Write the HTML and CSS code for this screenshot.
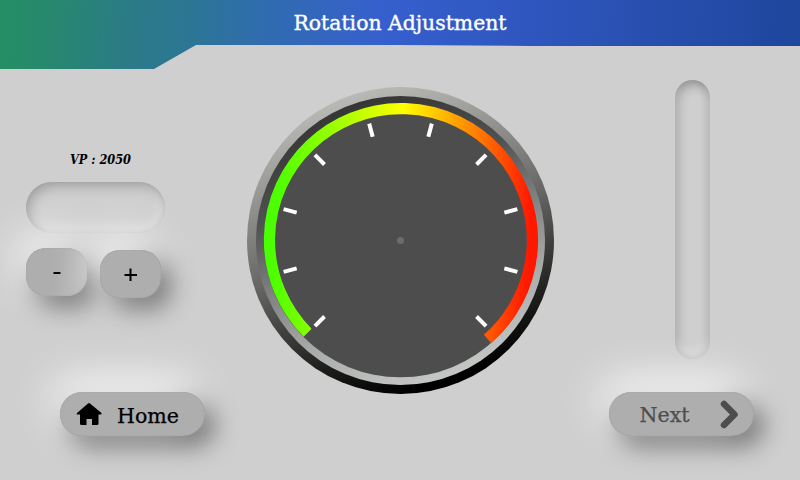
FILE: index.html
```html
<!DOCTYPE html>
<html lang="en">
<head>
<meta charset="utf-8">
<title>Rotation Adjustment</title>
<link rel="stylesheet" href="styles.css">
</head>
<body>
<header class="header">
  <svg class="label" width="220" height="34"><text class="title" x="3.5" y="22" textLength="213" lengthAdjust="spacingAndGlyphs">Rotation Adjustment</text></svg>
</header>
<main class="main">
  <section class="left">
    <svg class="vp" width="70" height="20"><text class="vp-text" x="4" y="15" textLength="61" lengthAdjust="spacingAndGlyphs">VP : 2050</text></svg>
    <div class="field"></div>
    <div class="steps">
      <button class="button step minus"><svg width="61" height="48"><path d="M27.5 25H34.5" stroke="#000" stroke-width="2"/></svg></button>
      <button class="button step plus"><svg width="61" height="48"><path d="M24.5 25H37M30.5 18.5V31" stroke="#000" stroke-width="2"/></svg></button>
    </div>
    <button class="button nav home">
      <svg width="145" height="44">
        <path d="M28 11.500Q29 10.500 30 11.500L41.500 21Q42 22.500 40.500 22.500H38.500V31.500Q38.500 33 37 33H32V27H26.500V33H21.500Q20 33 20 31.500V22.500H17.500Q16 22.500 17 21Z"/>
        <text class="nav-text" x="57" y="31" textLength="62" lengthAdjust="spacingAndGlyphs">Home</text>
      </svg>
    </button>
  </section>
  <section class="center">
    <svg width="307" height="307" viewBox="-153.5 -153.5 307 307">
      <defs>
        <linearGradient id="rim" x1=".33" y1="0" x2=".67" y2="1">
          <stop offset="0" stop-color="#bdbeb9"/><stop offset=".12" stop-color="#aaaba7"/><stop offset=".5" stop-color="#656563"/><stop offset=".78" stop-color="#222220"/><stop offset=".95" stop-color="#000"/>
        </linearGradient>
        <linearGradient id="bevel" x1=".32" y1="0" x2=".68" y2="1">
          <stop offset="0" stop-color="#333"/><stop offset=".15" stop-color="#414141"/><stop offset=".3" stop-color="#505252"/><stop offset=".5" stop-color="#7c7e7e"/><stop offset=".75" stop-color="#aaadab"/><stop offset="1" stop-color="#c8cac8"/>
        </linearGradient>
        <linearGradient id="scale" gradientUnits="userSpaceOnUse" x1="-137" y1="-6" x2="137" y2="6">
          <stop offset="0" stop-color="#48ff00"/><stop offset=".05" stop-color="#50ff00"/><stop offset=".49" stop-color="#ff0"/><stop offset=".97" stop-color="#ff1800"/>
        </linearGradient>
      </defs>
      <circle r="153.500" fill="url(#rim)"/>
      <circle r="144.500" fill="url(#bevel)"/>
      <circle r="136.800" fill="#4d4d4d"/>
      <path d="M-92.900 92.200A131.500 131.500 0 1 1 87.100 98.500" fill="none" stroke="url(#scale)" stroke-width="11.200"/>
      <g stroke="#fff" stroke-width="4">
        <path d="M-121 0H-107.500" transform="rotate(-45)"/>
        <path d="M-121 0H-107.500" transform="rotate(-15)"/>
        <path d="M-121 0H-107.500" transform="rotate(15)"/>
        <path d="M-121 0H-107.500" transform="rotate(45)"/>
        <path d="M-121 0H-107.500" transform="rotate(75)"/>
        <path d="M-121 0H-107.500" transform="rotate(105)"/>
        <path d="M-121 0H-107.500" transform="rotate(135)"/>
        <path d="M-121 0H-107.500" transform="rotate(165)"/>
        <path d="M-121 0H-107.500" transform="rotate(195)"/>
        <path d="M-121 0H-107.500" transform="rotate(225)"/>
      </g>
      <circle r="3.500" fill="#6c6c6c"/>
    </svg>
  </section>
  <section class="right">
    <button class="button nav next">
      <svg width="145" height="44">
        <text class="nav-text muted" x="30.500" y="30" textLength="50" lengthAdjust="spacingAndGlyphs">Next</text>
        <path d="M115 12L125.500 22.500L115 33" fill="none" stroke="#4d4d4d" stroke-width="6.500" stroke-linecap="round" stroke-linejoin="round"/>
      </svg>
    </button>
    <div class="slider"></div>
  </section>
</main>
</body>
</html>
```

FILE: styles.css
```css
* { box-sizing: border-box; }
body {
  margin: 0;
  width: 800px;
  height: 480px;
  overflow: hidden;
  background: #cfcfcf;
  font-family: "DejaVu Serif", serif;
}
svg { display: block; overflow: visible; }
.header {
  position: relative;
  height: 69px;
  padding-left: 290px;
  padding-top: 8px;
}
.header::before {
  content: "";
  position: absolute;
  inset: 0;
  z-index: -1;
  background: linear-gradient(94deg, #258f65 0%, #27876f 7%, #2b7b86 16%, #2c7695 24%, #306cb0 33%, #365fce 48%, #2f56be 66%, #1f469c 100%);
  clip-path: polygon(0 0, 800px 0, 800px 46px, 530px 46px, 400px 45px, 196px 45px, 154px 69px, 0 69px);
}
.title { font-size: 21px; fill: #fff; stroke: #fff; stroke-width: .4px; }
.vp { margin-left: 66px; margin-top: 80px; }
.vp-text {
  font-size: 12.5px;
  font-weight: bold;
  font-style: italic;
  fill: #000;
}
.main {
  display: grid;
  grid-template-columns: 247px 307px 246px;
  height: 411px;
}
.left, .right { display: flex; flex-direction: column; align-items: flex-start; }
.center { padding-top: 18px; }
.field {
  width: 139px;
  height: 51px;
  margin: 13px 0 0 26px;
  border-radius: 26px;
  background: #cfcfcf;
  box-shadow: inset 4px 5px 12px rgba(0,0,0,.2), inset -4px -5px 12px rgba(255,255,255,.25), inset 0 0 4px rgba(0,0,0,.1);
}
.steps {
  display: flex;
  gap: 13px;
  margin: 15px 0 0 26px;
}
.button {
  flex: none;
  padding: 0;
  border: 0;
  font-family: inherit;
  background: #aeaeae;
  box-shadow: -8px -13px 44px rgba(255,255,255,.9), 9px 10px 24px rgba(0,0,0,.5), inset 0 0 1px #888;
}
.step { width: 61px; height: 48px; border-radius: 20px; }
.minus { background: linear-gradient(105deg, #aeaeae 50%, #bdbdbd); }
.plus { margin-top: 2px; }
.nav { width: 145px; height: 44px; border-radius: 22px; }
.home { margin: 94px 0 0 60px; }
.nav-text { font-size: 21px; fill: #000; stroke: #000; stroke-width: .25px; }
.muted { fill: #4d4d4d; stroke: #4d4d4d; }
.right { flex-direction: column-reverse; justify-content: flex-end; }
.next { margin: 33px 0 0 55px; }
.slider {
  position: relative;
  flex: none;
  width: 35px;
  height: 279px;
  margin: 11px 0 0 121px;
  border-radius: 18px;
  background: #cfcfcf;
  box-shadow: inset 0 -8px 10px rgba(255,255,255,.35), inset 3px 5px 11px rgba(0,0,0,.22), inset -2px 0 9px rgba(0,0,0,.17);
}
```
